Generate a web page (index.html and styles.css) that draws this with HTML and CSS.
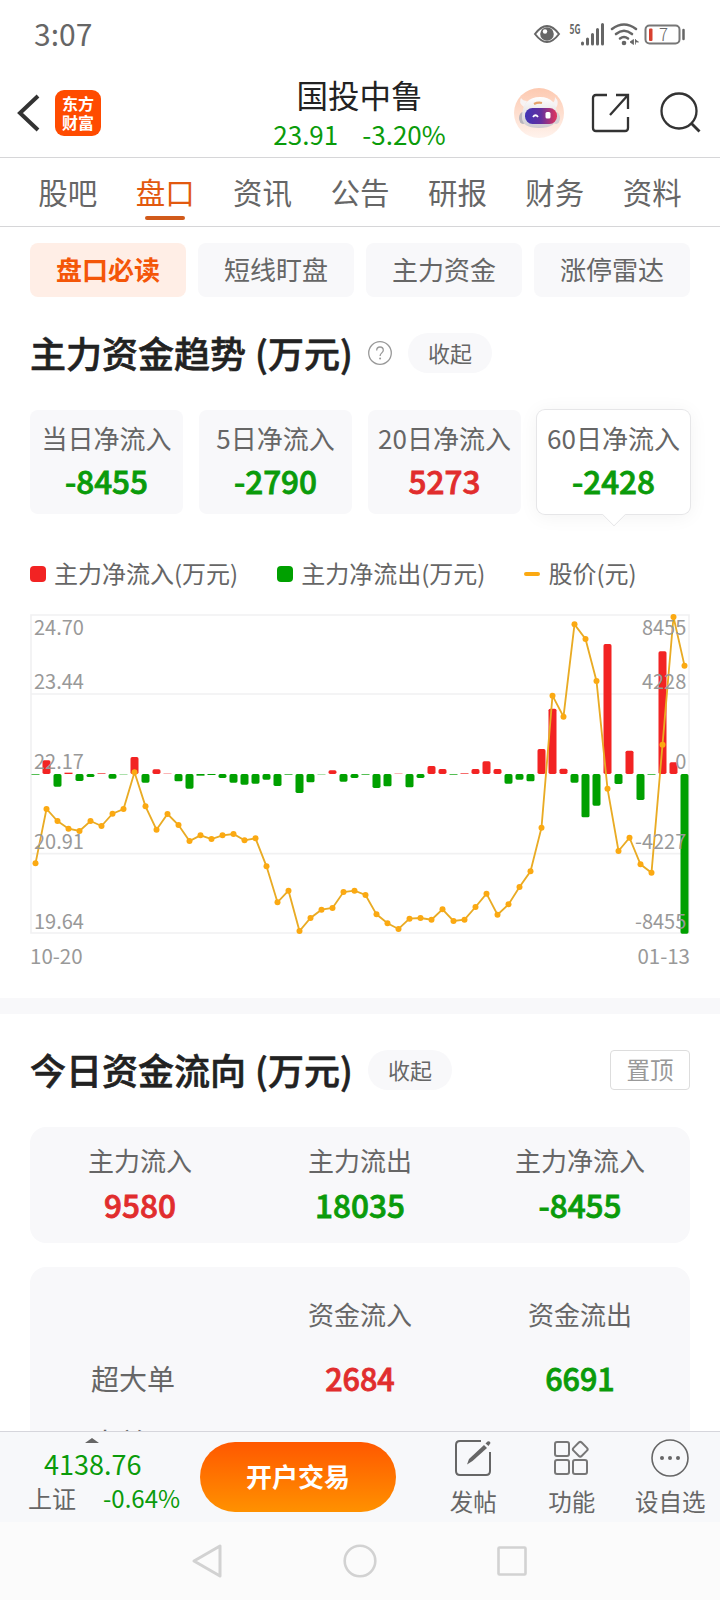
FILE: index.html
```html
<!DOCTYPE html>
<html lang="zh-CN">
<head>
  <meta charset="utf-8">
  <title>国投中鲁 - 盘口</title>
  <link rel="stylesheet" href="styles.css">
</head>
<body>
  <div class="app">
    <div class="status-bar">
      <span class="time">3:07</span>
      <svg class="status-icons" width="156" height="26" viewBox="0 0 156 26">
        <!-- eye -->
        <path d="M3 13 Q15 -3 27 13 Q15 29 3 13 Z" fill="none" stroke="#666" stroke-width="2"/>
        <circle cx="15" cy="13" r="6.8" fill="#666"/>
        <circle cx="13" cy="10.5" r="2.2" fill="#fff"/>
        <!-- signal -->
        <text class="net" x="37.500" y="12.5" textLength="11" lengthAdjust="spacingAndGlyphs">5G</text>
        <path d="M50.5 22v1M55.500 18v5M60.500 13.500v9.500M65.500 8.500v14.500M70.500 3.500v19.500" stroke="#666" stroke-width="3" stroke-linecap="round"/>
        <!-- wifi -->
        <path d="M80 8Q92 -1 104 8M84 13Q92 6.500 100 13M88 17.500Q92 14.500 96 17.500" fill="none" stroke="#666" stroke-width="2.600" stroke-linecap="round"/>
        <circle cx="92" cy="22" r="2.300" fill="#666"/>
        <path d="M101.500 18.500v5l-3.500-2.500zM103.500 18v5.500M103.500 19l3 2h-3z" fill="#666" stroke="#666" stroke-width="0.800"/>
        <!-- battery -->
        <rect x="113.500" y="4.500" width="34" height="18" rx="4" fill="#fff" stroke="#777" stroke-width="2"/>
        <rect x="117" y="7.500" width="3.500" height="12.500" rx="1" fill="#d8402f"/>
        <text class="level" x="131.500" y="19.500">7</text>
        <path d="M151.500 9v9" stroke="#666" stroke-width="2.500" stroke-linecap="round"/>
      </svg>
    </div>

    <div class="header">
      <div class="header-left">
        <svg width="24" height="40" viewBox="0 0 24 40"><path d="M22 3L4 20l18 17" fill="none" stroke="#333" stroke-width="4"/></svg>
        <div class="logo">东方<br>财富</div>
      </div>
      <div class="stock">
        <div class="stock-name">国投中鲁</div>
        <div class="stock-price"><span>23.91</span><span>-3.20%</span></div>
      </div>
      <div class="header-right">
        <svg width="50" height="50" viewBox="0 0 50 50">
          <defs>
            <linearGradient id="halo" x1="0" y1="0" x2="0" y2="1"><stop offset="0" stop-color="#fdc9b0"/><stop offset="1" stop-color="#fff3ed"/></linearGradient>
            <linearGradient id="visor"><stop offset="0" stop-color="#3f34b5"/><stop offset="0.500" stop-color="#63309f"/><stop offset="1" stop-color="#e2355c"/></linearGradient>
            <linearGradient id="shell" x1="0" y1="0" x2="0" y2="1"><stop offset="0" stop-color="#fff"/><stop offset="1" stop-color="#cfcbd0"/></linearGradient>
          </defs>
          <circle cx="25" cy="25" r="25" fill="url(#halo)"/>
          <ellipse cx="9" cy="30" rx="4" ry="6" fill="#b9b6bd"/>
          <ellipse cx="42" cy="30" rx="4" ry="6" fill="#d5d0d5"/>
          <path d="M10 19Q4 15 7 10q2 3 6 3zM38 15q3-1 3-6 5 5 1 11z" fill="#f7f3f4"/>
          <path d="M8 28Q9 9 26 9t17 19q0 12-18 12T8 28z" fill="url(#shell)"/>
          <path d="M20 16q4-2 8-1" stroke="#e4a36c" stroke-width="2.200" fill="none"/>
          <rect x="11" y="20" width="32" height="16" rx="7.500" fill="url(#visor)"/>
          <path d="M19 29q2.500-3.500 5 0" fill="none" stroke="#fff" stroke-width="1.800"/>
          <rect x="31.500" y="24" width="5" height="6.500" rx="1.500" fill="#fff"/>
        </svg>
        <svg class="share" width="40" height="40" viewBox="0 0 40 40"><path d="M16 2H5Q2 2 2 5v30q0 3 3 3h29q3 0 3-3V24M25 2h12v14M37 2L19 22" fill="none" stroke="#333" stroke-width="2.300"/></svg>
        <svg width="42" height="42" viewBox="0 0 42 42"><circle cx="19" cy="19" r="17.500" fill="none" stroke="#333" stroke-width="2.300"/><path d="M31 31l8.500 8.500" stroke="#333" stroke-width="2.800"/></svg>
      </div>
    </div>

    <div class="tabs">
      <span>股吧</span>
      <span class="active">盘口</span>
      <span>资讯</span>
      <span>公告</span>
      <span>研报</span>
      <span>财务</span>
      <span>资料</span>
    </div>

    <div class="content">
      <div class="chips">
        <div class="chip active">盘口必读</div>
        <div class="chip">短线盯盘</div>
        <div class="chip">主力资金</div>
        <div class="chip">涨停雷达</div>
      </div>

      <div class="section-head">
        <h2>主力资金趋势 (万元)</h2>
        <svg class="help" width="24" height="24" viewBox="0 0 24 24"><circle cx="12" cy="12" r="11.300" fill="none" stroke="#999" stroke-width="1.300"/><path d="M8.700 9.500Q8.700 6 12 6t3.300 3.300c0 2.500-3.200 2.700-3.200 5.600" fill="none" stroke="#999" stroke-width="1.300"/><circle cx="12.100" cy="17.500" r="1" fill="#999"/></svg>
        <span class="pill">收起</span>
      </div>

      <div class="cards">
        <div class="card"><span>当日净流入</span><b class="green">-8455</b></div>
        <div class="card"><span>5日净流入</span><b class="green">-2790</b></div>
        <div class="card"><span>20日净流入</span><b class="red">5273</b></div>
        <div class="card selected"><span>60日净流入</span><b class="green">-2428</b></div>
      </div>

      <div class="legend">
        <span><i class="in"></i>主力净流入(万元)</span>
        <span><i class="out"></i>主力净流出(万元)</span>
        <span><i class="price"></i>股价(元)</span>
      </div>

      <svg id="chart" class="chart" viewBox="0 0 1980 960"></svg>
      <div class="dates"><span>10-20</span><span>01-13</span></div>

      <div class="divider"></div>

      <div class="section-head today">
        <h2>今日资金流向 (万元)</h2>
        <span class="pill">收起</span>
        <span class="pin">置顶</span>
      </div>

      <div class="summary">
        <div><span>主力流入</span><b class="red">9580</b></div>
        <div><span>主力流出</span><b class="green">18035</b></div>
        <div><span>主力净流入</span><b class="green">-8455</b></div>
      </div>

      <div class="orders">
        <span></span><span>资金流入</span><span>资金流出</span>
        <span class="kind">超大单</span><b class="red">2684</b><b class="green">6691</b>
        <span class="kind">大单</span>
      </div>
    </div>

    <div class="bottom-bar">
      <div class="index">
        <svg width="14" height="5" viewBox="0 0 14 5"><path d="M0 5L7 0l7 5z" fill="#666"/></svg>
        <div class="index-value">4138.76</div>
        <div class="index-row"><span>上证</span><span class="green">-0.64%</span></div>
      </div>
      <div class="trade">开户交易</div>
      <div class="action">
        <svg width="38" height="38" viewBox="0 0 38 38"><path d="M27 2H6Q2 2 2 6v26q0 4 4 4h26q4 0 4-4V13" fill="none" stroke="#666" stroke-width="2"/><path d="M13 25.500l2-5.500L30 6l3 3L18.500 22z" fill="#666"/><path d="M31.500 4.500l2-2q2.500-1 3 1.500l-2 3z" fill="#666"/></svg>
        <span>发帖</span>
      </div>
      <div class="action">
        <svg width="38" height="38" viewBox="1 0 38 38" fill="none" stroke="#777" stroke-width="2"><rect x="3" y="3" width="14" height="14" rx="2"/><rect x="3" y="21" width="14" height="14" rx="2"/><rect x="21" y="21" width="14" height="14" rx="2"/><rect x="22.500" y="4.500" width="11.500" height="11.500" rx="2" transform="rotate(45 28.250 10.250)"/></svg>
        <span>功能</span>
      </div>
      <div class="action">
        <svg width="38" height="38" viewBox="0 0 38 38"><circle cx="19" cy="19" r="18" fill="none" stroke="#666" stroke-width="1.600"/><g fill="#666"><circle cx="11" cy="19" r="2"/><circle cx="19" cy="19" r="2"/><circle cx="27" cy="19" r="2"/></g></svg>
        <span>设自选</span>
      </div>
    </div>

    <div class="nav-bar">
      <svg width="34" height="38" viewBox="3 0 34 38"><path d="M32 4v30L6 19z" fill="none" stroke="#d2d2d2" stroke-width="3" stroke-linejoin="round"/></svg>
      <svg width="34" height="34" viewBox="0 0 34 34"><circle cx="17" cy="17" r="15.300" fill="none" stroke="#d2d2d2" stroke-width="2.600"/></svg>
      <svg width="34" height="34" viewBox="0 0 34 34"><rect x="3.500" y="3.500" width="27" height="27" rx="1" fill="none" stroke="#d2d2d2" stroke-width="2.600"/></svg>
    </div>
  </div>
  <script src="chart.js"></script>
</body>
</html>
```
FILE: styles.css
```css
body {
    margin: 0;
    background-color: #fff;
    font-family: "Noto Sans CJK SC", sans-serif;
    color: #666;
}

h2 {
    margin: 0;
}

svg {
    display: block;
    flex: none;
    overflow: visible;
}

.app {
    width: 720px;
    height: 1600px;
    display: flex;
    flex-direction: column;
    overflow: hidden;
}

.green {
    color: #0a9b0a;
}

.red {
    color: #e12d2d;
}

/* status bar */
.status-bar {
    height: 68px;
    padding: 0 32px 0 34px;
    display: flex;
    align-items: center;
    justify-content: space-between;
    flex: none;
}

.time {
    font-size: 30px;
    line-height: 36px;
    padding-bottom: 3px;
}

.net {
    font-size: 13px;
    font-weight: bold;
    fill: #666;
}

.level {
    font-size: 17px;
    font-weight: 300;
    text-anchor: middle;
    fill: #666;
}

/* header */
.header {
    height: 89px;
    border-bottom: 1px solid #d6d6d8;
    display: grid;
    grid-template-columns: 200px 1fr 200px;
    align-items: center;
    padding: 0 18px 0 16px;
    flex: none;
}

.header-left {
    display: flex;
    align-items: center;
    gap: 15px;
}

.logo {
    width: 46px;
    height: 46px;
    box-sizing: border-box;
    padding-top: 4px;
    border-radius: 9px;
    background-color: #ff4b00;
    color: #fff;
    font-size: 16px;
    font-weight: bold;
    line-height: 19px;
    text-align: center;
}

.stock {
    text-align: center;
}

.stock-name {
    font-size: 31.500px;
    line-height: 38px;
    color: #222;
    padding-left: 1px;
}

.stock-price {
    display: flex;
    justify-content: center;
    gap: 24px;
    padding: 2px 0 0 1px;
    margin-bottom: -2px;
    font-size: 26px;
    line-height: 38px;
    color: #0a9b0a;
}

.header-right {
    display: flex;
    align-items: center;
    justify-content: flex-end;
    gap: 27px;
}

.share {
    margin-right: 2px;
}

/* tabs */
.tabs {
    height: 68px;
    padding: 0 19px;
    border-bottom: 1px solid #d6d6d8;
    display: grid;
    grid-template-columns: repeat(7, 1fr);
    flex: none;
}

.tabs span {
    font-size: 29.500px;
    line-height: 67px;
    text-align: center;
    position: relative;
}

.tabs .active {
    color: #e2590f;
}

.tabs .active::after {
    content: "";
    position: absolute;
    left: 50%;
    bottom: 6px;
    width: 40px;
    height: 4px;
    margin-left: -20px;
    border-radius: 2px;
    background-color: #d15a1a;
}

/* scrolling content */
.content {
    flex: 1;
    min-height: 0;
    padding-top: 16px;
    overflow: hidden;
}

.chips {
    display: grid;
    grid-template-columns: repeat(4, 1fr);
    gap: 12px;
    padding: 0 30px;
}

.chip {
    height: 54px;
    border-radius: 8px;
    background-color: #f8f8fa;
    font-size: 26px;
    line-height: 52px;
    text-align: center;
}

.chip.active {
    background-color: #ffeee6;
    color: #f45608;
    font-weight: bold;
}

.section-head {
    height: 40px;
    margin: 36px 30px 0;
    display: flex;
    align-items: center;
}

.section-head h2 {
    font-size: 36px;
    font-weight: 500;
    line-height: 38px;
    color: #222;
    white-space: nowrap;
    width: 338px;
    padding-bottom: 2px;
    word-spacing: 1px;
    -webkit-text-stroke: 0.6px #222;
}

.help {
    margin-right: 16px;
}

.pill {
    width: 84px;
    height: 40px;
    border-radius: 20px;
    background-color: #f8f8fa;
    font-size: 22px;
    line-height: 38px;
    text-align: center;
}

.pin {
    width: 78px;
    height: 38px;
    margin-left: auto;
    border: 1px solid #ddd;
    border-radius: 4px;
    color: #999;
    font-size: 23.500px;
    line-height: 36px;
    text-align: center;
}

.cards {
    display: grid;
    grid-template-columns: repeat(4, 1fr);
    gap: 16px;
    margin: 37px 30px 0;
}

.card {
    height: 104px;
    box-sizing: border-box;
    padding-top: 8px;
    border-radius: 8px;
    background-color: #f8f8fa;
    display: flex;
    flex-direction: column;
    align-items: center;
    position: relative;
}

.card span {
    font-size: 26px;
    line-height: 40px;
    white-space: nowrap;
}

.card b,
.summary b,
.orders b {
    font-size: 31.500px;
    font-weight: 500;
    line-height: 44px;
    -webkit-text-stroke: 0.8px currentColor;
}

.card.selected {
    background-color: #fff;
    box-shadow: 0 0 0 1px #e6e6e8, 0 2px 20px rgba(0, 0, 0, 0.06);
}

.card.selected::after {
    content: "";
    position: absolute;
    left: 50%;
    bottom: -9px;
    width: 17px;
    height: 17px;
    margin-left: -9px;
    border: solid #e6e6e8;
    border-width: 0 1px 1px 0;
    background-color: #fff;
    clip-path: polygon(100% 0, 100% 100%, 0 100%);
    transform: rotate(45deg);
}

.legend {
    display: flex;
    gap: 39px;
    margin: 41px 30px 0;
    font-size: 24px;
    line-height: 36px;
}

.legend span {
    display: flex;
    align-items: center;
    white-space: nowrap;
}

.legend i {
    width: 16px;
    height: 16px;
    margin-right: 8px;
    border-radius: 4px;
    position: relative;
    top: 1px;
}

.legend .in {
    background-color: #f22323;
}

.legend .out {
    background-color: #00a000;
}

.legend .price {
    height: 4px;
    border-radius: 2px;
    background-color: #fba912;
}

.chart {
    width: 660px;
    height: 320px;
    margin: 23px 30px 0;
}

.chart .grid {
    fill: none;
    stroke: #f1f1f2;
    stroke-width: 5;
}

.chart .line {
    fill: none;
    stroke: #e9ab24;
    stroke-width: 5.500;
}

.chart .dot {
    fill: #fba912;
}

.chart .label {
    font-size: 60px;
    fill: #999;
}

.chart .right {
    text-anchor: end;
}

.dates {
    display: flex;
    justify-content: space-between;
    margin: 6px 30px 0;
    font-size: 20.500px;
    line-height: 30px;
    color: #999;
}

.divider {
    height: 16px;
    margin-top: 28px;
    background-color: #f8f8fa;
}

.summary {
    height: 116px;
    box-sizing: border-box;
    margin: 37px 30px 0;
    padding-top: 13px;
    border-radius: 16px;
    background-color: #f8f8fa;
    display: grid;
    grid-template-columns: repeat(3, 1fr);
    text-align: center;
}

.summary div {
    display: flex;
    flex-direction: column;
}

.summary span {
    font-size: 26px;
    line-height: 40px;
}

.summary b {
    line-height: 48px;
}

.orders {
    margin: 24px 30px 0;
    padding-top: 15px;
    border-radius: 16px 16px 0 0;
    background-color: #f8f8fa;
    display: grid;
    grid-template-columns: repeat(3, 1fr);
    grid-auto-rows: 64px;
    line-height: 64px;
    text-align: center;
    font-size: 26px;
}

.orders .kind {
    padding-left: 61px;
    font-size: 28px;
    text-align: left;
}

.orders b {
    font-size: 30.500px;
    line-height: 64px;
}

/* bottom bar */
.bottom-bar {
    height: 90px;
    border-top: 1px solid #d6d6dc;
    background-color: #f7f8fa;
    display: flex;
    flex: none;
    position: relative;
}

.index {
    width: 200px;
    display: flex;
    flex-direction: column;
}

.index svg {
    margin: 6px 0 0 85px;
}

.index-value {
    padding: 1px 0 0 44px;
    font-size: 27px;
    line-height: 39px;
    color: #0a9b0a;
}

.index-row {
    display: flex;
    gap: 27px;
    padding-left: 28px;
    font-size: 24px;
    line-height: 29px;
}

.trade {
    width: 196px;
    height: 70px;
    margin: 10px 28px 0 0;
    border-radius: 35px;
    background: linear-gradient(#ff5800, #ff9100);
    color: #fff;
    font-size: 26px;
    font-weight: bold;
    line-height: 68px;
    text-align: center;
}

.action {
    width: 98.500px;
    padding-top: 7px;
    display: flex;
    flex-direction: column;
    align-items: center;
    font-size: 23.500px;
    line-height: 36px;
    white-space: nowrap;
}

.action span {
    margin-top: 6px;
}

/* system navigation */
.nav-bar {
    height: 78px;
    background-color: #fbfbfb;
    display: flex;
    align-items: center;
    justify-content: center;
    gap: 118px;
    flex: none;
}
```
FILE: chart.js
```js
// daily net flow, bar height above / below the zero line
var flow = [-2, 41, -38, 4, -21, -9, 2, -14, -1, 51, -26, 14, 1, -22, -44, -5, -3, -12, -26, -32,
    -29, -17, -36, -2, -57, -25, -1, 11, -23, -12, -2, -42, -37, 1, -40, -12, 24, 15, -2, 2,
    15, 38, 15, -29, -17, -22, 75, 196, 16, -26, -130, -95, 390, -30, 70, -78, -2, 368, 35, -479];

// stock price, y position in the plot
var price = [748, 585, 621, 644, 651, 621, 636, 599, 585, 475, 577, 647, 600, 633, 681, 664, 675, 664, 660, 679,
    673, 757, 865, 830, 951, 912, 887, 882, 834, 830, 843, 901, 928, 945, 914, 912, 917, 886, 921, 917,
    879, 839, 902, 871, 819, 772, 641, 245, 308, 31, 75, 201, 524, 711, 671, 751, 776, 392, 9, 155];

var ZERO = 480;
var x = i => 16.5 + i * 33;

var html = '<path class="grid" d="M3 3H1977V957H3ZM3 240H1977M3 719H1977"/>';

flow.forEach((v, i) => {
    var h = Math.abs(v);
    html += `<rect x="${x(i) - 12}" y="${v > 0 ? ZERO - h : ZERO}" width="24" height="${h}" rx="${h > 8 ? 5 : 0}" fill="${v > 0 ? '#f22323' : '#00a000'}"/>`;
});

html += `<polyline class="line" points="${price.map((y, i) => x(i) + ',' + y).join(' ')}"/>`;
price.forEach((y, i) => {
    html += `<circle class="dot" cx="${x(i)}" cy="${y}" r="9"/>`;
});

var rows = [63, 225, 465, 705, 945];
['24.70', '23.44', '22.17', '20.91', '19.64'].forEach((t, i) => {
    html += `<text class="label" x="12" y="${rows[i]}">${t}</text>`;
});
['8455', '4228', '0', '-4227', '-8455'].forEach((t, i) => {
    html += `<text class="label right" x="1969" y="${rows[i]}">${t}</text>`;
});

document.getElementById('chart').innerHTML = html;
```
